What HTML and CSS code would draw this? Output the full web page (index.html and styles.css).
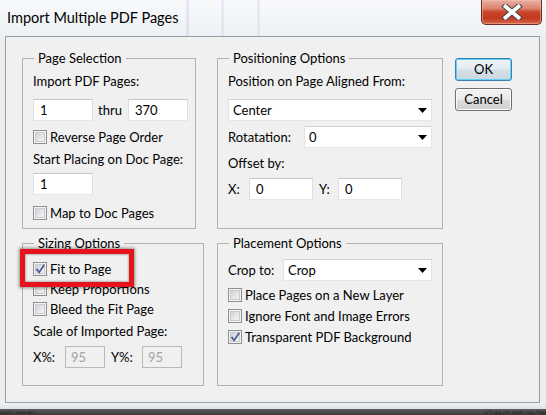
FILE: index.html
```html
<!DOCTYPE html>
<html>
<head>
<meta charset="utf-8">
<link rel="stylesheet" href="styles.css">
</head>
<body>
<div class="window">
  <div class="titlebar">
    <span class="title">Import Multiple PDF Pages</span>
    <div class="close">
      <svg width="22" height="16" viewBox="0 0 22 16">
        <path d="M4.5 2.5 L17.5 13.5 M17.5 2.5 L4.5 13.5" stroke="#4a4a4a" stroke-width="6" stroke-linecap="square" fill="none"/>
        <path d="M4.5 2.5 L17.5 13.5 M17.5 2.5 L4.5 13.5" stroke="#ffffff" stroke-width="3.8" stroke-linecap="square" fill="none"/>
      </svg>
    </div>
  </div>
  <div class="client">
    <fieldset class="group page-sel">
      <legend>Page Selection</legend>
      <div class="lbl mt8">Import PDF Pages:</div>
      <div class="row mt10"><div class="field w60">1</div><span class="thru">thru</span><div class="field w60">370</div></div>
      <div class="cbrow mt8"><span class="cb"></span>Reverse Page Order</div>
      <div class="lbl mt6">Start Placing on Doc Page:</div>
      <div class="field w60 mt6">1</div>
      <div class="cbrow mt10"><span class="cb"></span>Map to Doc Pages</div>
    </fieldset>

    <fieldset class="group pos">
      <legend>Positioning Options</legend>
      <div class="lbl mt8">Position on Page Aligned From:</div>
      <div class="select mt10"><span>Center</span><svg class="arrow" width="9" height="5" viewBox="0 0 9 5"><polygon points="0,0 9,0 4.5,5" fill="#000"/></svg></div>
      <div class="row mt5"><span>Rotatation:</span><div class="select w128 push"><span>0</span><svg class="arrow" width="9" height="5" viewBox="0 0 9 5"><polygon points="0,0 9,0 4.5,5" fill="#000"/></svg></div></div>
      <div class="lbl mt7">Offset by:</div>
      <div class="row mt7"><span class="xl">X:</span><div class="field w64">0</div><span class="yl">Y:</span><div class="field w64">0</div></div>
    </fieldset>

    <div class="buttons">
      <div class="btn ok">OK</div>
      <div class="btn">Cancel</div>
    </div>

    <fieldset class="group sizing">
      <legend>Sizing Options</legend>
      <div class="cbrow mt11"><span class="cb"><svg width="12" height="12" viewBox="0 0 12 12"><path d="M1.6 6.2 L3.6 5.4 L5 8 L9.6 1.2 L11 2.2 L5.2 10.8 Z" fill="#4a5c98"/></svg></span>Fit to Page</div>
      <div class="cbrow mt4"><span class="cb"></span>Keep Proportions</div>
      <div class="cbrow mt4"><span class="cb"></span>Bleed the Fit Page</div>
      <div class="lbl mt6">Scale of Imported Page:</div>
      <div class="row mt7"><span class="xpl">X%:</span><div class="field dis w40">95</div><span class="ypl">Y%:</span><div class="field dis w40">95</div></div>
    </fieldset>

    <fieldset class="group place">
      <legend>Placement Options</legend>
      <div class="row mt9"><span>Crop to:</span><div class="select w149 push"><span>Crop</span><svg class="arrow" width="9" height="5" viewBox="0 0 9 5"><polygon points="0,0 9,0 4.5,5" fill="#000"/></svg></div></div>
      <div class="cbrow mt6"><span class="cb"></span>Place Pages on a New Layer</div>
      <div class="cbrow mt5"><span class="cb"></span>Ignore Font and Image Errors</div>
      <div class="cbrow mt5"><span class="cb"><svg width="12" height="12" viewBox="0 0 12 12"><path d="M1.6 6.2 L3.6 5.4 L5 8 L9.6 1.2 L11 2.2 L5.2 10.8 Z" fill="#4a5c98"/></svg></span>Transparent PDF Background</div>
    </fieldset>
  </div>
  <div class="frame-bottom"></div>
  <div class="strip"><span class="strip-a">שמ"י עצב ומצוין שיע צצן ו"וה</span><span class="strip-b">הוש שמש: הלגנג</span></div>
  <div class="highlight"></div>
</div>
</body>
</html>
```

FILE: styles.css
```css
* { box-sizing: border-box; }
html, body { margin: 0; padding: 0; }
body {
  width: 546px;
  height: 415px;
  overflow: hidden;
  font-family: Lato, "Noto Sans", sans-serif;
  color: #000;
}
.window {
  position: relative;
  width: 546px;
  height: 415px;
  display: flex;
  flex-direction: column;
  background: #eceff2;
}
.titlebar {
  height: 36px;
  flex: none;
  display: flex;
  align-items: flex-start;
  background:
    linear-gradient(to right, transparent 186px, rgba(150,125,215,0.16) 186px, rgba(150,125,215,0.16) 189px, transparent 189px),
    linear-gradient(to right, transparent 221px, rgba(150,125,215,0.12) 221px, rgba(150,125,215,0.12) 224px, transparent 224px),
    linear-gradient(to right, transparent 257px, rgba(150,125,215,0.12) 257px, rgba(150,125,215,0.12) 260px, transparent 260px),
    linear-gradient(#f7f9fb, #eef1f4);
}
.title {
  font-size: 14.5px;
  line-height: 18px;
  padding: 9px 0 0 7px;
}
.close {
  margin-left: auto;
  margin-right: 4px;
  width: 61px;
  height: 25px;
  border: 1px solid #6e2d22;
  border-top: none;
  border-radius: 0 0 5px 5px;
  background: linear-gradient(#eab0a2 0%, #dd8470 35%, #c8442b 50%, #c23a20 75%, #d8664b 100%);
  box-shadow: inset 0 0 0 1px rgba(255,200,180,0.45);
  display: flex;
  align-items: center;
  justify-content: center;
}
.client {
  margin-left: 5px;
  width: 535px;
  height: 367px;
  flex: none;
  background: #f0f0f0;
  border: 1px solid #9aa0a7;
  padding: 14px 0 0 16px;
  display: grid;
  grid-template-columns: 182px 226px 57px;
  column-gap: 13px;
  row-gap: 7px;
  align-content: start;
  align-items: stretch;
  font-size: 13px;
}
.group {
  margin: 0;
  min-width: 0;
  border: 1px solid #b2b2b2;
  padding: 0 10px 7px 10px;
  font-size: 13px;
}
.group legend {
  padding: 0 4px;
  margin-left: 1px;
  font-size: 13px;
  line-height: 14px;
}
.page-sel { width: 174px; justify-self: start; padding-right: 6px; }
.sizing { padding-bottom: 17px; }

.lbl { height: 16px; line-height: 16px; white-space: nowrap; }
.row { display: flex; align-items: center; white-space: nowrap; }
.cbrow { display: flex; align-items: center; height: 16px; gap: 3px; white-space: nowrap; }

.mt4 { margin-top: 4px; }
.mt5 { margin-top: 5px; }
.mt6 { margin-top: 6px; }
.mt7 { margin-top: 7px; }
.mt8 { margin-top: 8px; }
.mt9 { margin-top: 9px; }
.mt10 { margin-top: 10px; }
.mt11 { margin-top: 11px; }

.field {
  height: 22px;
  background: #fff;
  border: 1px solid;
  border-color: #c4c7cc #dcdfe3 #e3e6ea #dcdfe3;
  padding-left: 6px;
  line-height: 20px;
  font-size: 13px;
  flex: none;
}
.field.dis {
  background: #f0f0f0;
  border-color: #b9b9b9;
  color: #a3a3a3;
  padding-left: 5px;
}
.w40 { width: 40px; }
.w60 { width: 60px; }
.w64 { width: 64px; }
.w128 { width: 128px; }
.w149 { width: 149px; }
.thru { margin: 0 6px 0 5px; }
.xl { width: 21px; }
.yl { width: 19px; margin-left: 6px; }
.xpl { width: 32px; }
.ypl { width: 31px; margin-left: 6px; }

.select {
  height: 22px;
  background: #fff;
  border: 1px solid;
  border-color: #d0d3d7 #dfe2e6 #e3e6ea #dfe2e6;
  display: flex;
  align-items: center;
  justify-content: space-between;
  padding: 0 4px 0 4px;
  flex: none;
}
.push { margin-left: auto; }
.arrow { display: block; flex: none; }

.cb {
  width: 14px;
  height: 14px;
  flex: none;
  border: 1px solid #8e8f90;
  background: linear-gradient(135deg, #c4c7cc 0%, #e6e7e9 55%, #f6f6f6 100%);
  box-shadow: inset 0 0 0 1px #f3f3f3, inset 0 0 0 2px #c9cbce;
  display: flex;
  align-items: center;
  justify-content: center;
}
.cb svg { display: block; }

.buttons {
  margin-top: 7px;
  margin-left: -1px;
  display: flex;
  flex-direction: column;
  gap: 7px;
  align-self: start;
}
.btn {
  width: 57px;
  height: 23px;
  border: 1px solid #707070;
  border-radius: 3px;
  background: linear-gradient(#f3f3f3 0%, #ebebeb 48%, #dddddd 52%, #cfcfcf 100%);
  box-shadow: inset 0 0 0 1px #fbfbfb;
  text-align: center;
  line-height: 21px;
  font-size: 13px;
}
.btn.ok {
  border-color: #3c7fb1;
  background: linear-gradient(#eef4f8 0%, #e4ebf1 48%, #d6dfe7 52%, #cbd6e0 100%);
  box-shadow: inset 0 0 0 1px #5fd0f6;
}

.frame-bottom {
  height: 6px;
  flex: none;
  background: linear-gradient(#eef1f4, #dfe2e5);
}
.strip {
  height: 6px;
  flex: none;
  overflow: hidden;
  background: linear-gradient(#5d5d5d, #3a3a3a);
  display: flex;
  align-items: center;
  justify-content: space-between;
  direction: rtl;
  font-size: 5px;
  line-height: 6px;
  color: #1a1a1a;
  font-family: "DejaVu Sans", sans-serif;
}
.strip-b { margin-right: 12px; }
.strip-a { margin-left: 376px; }

.highlight {
  position: absolute;
  left: 20px;
  top: 249px;
  width: 114px;
  height: 38px;
  border: 5px solid #e6131b;
  box-shadow: 0 0 3px 1px rgba(0,0,0,0.4), inset 0 0 2px 1px rgba(0,0,0,0.25);
}
```
